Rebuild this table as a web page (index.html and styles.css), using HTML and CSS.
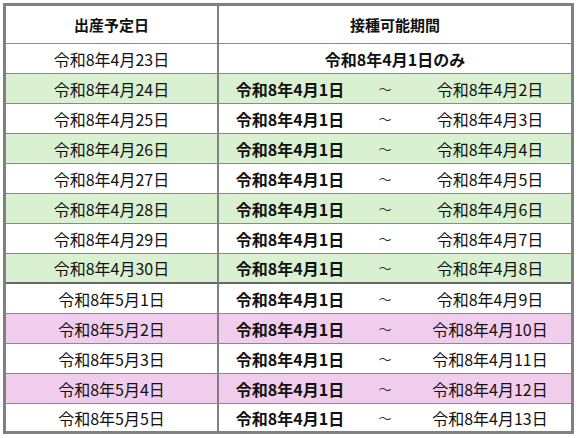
FILE: index.html
```html
<!DOCTYPE html>
<html lang="ja">
<head>
<meta charset="utf-8">
<link rel="stylesheet" href="styles.css">
</head>
<body>
<div class="frame">
<table class="schedule">
  <colgroup>
    <col class="c-due">
    <col class="c-from">
    <col class="c-tilde">
    <col class="c-to">
  </colgroup>
  <thead>
    <tr class="head">
      <th class="due">出産予定日</th>
      <th colspan="3">接種可能期間</th>
    </tr>
  </thead>
  <tbody>
    <tr><td class="due">令和8年4月23日</td><td colspan="3" class="only">令和8年4月1日のみ</td></tr>
    <tr class="green"><td class="due">令和8年4月24日</td><td class="from">令和8年4月1日</td><td class="tilde">～</td><td class="to">令和8年4月2日</td></tr>
    <tr><td class="due">令和8年4月25日</td><td class="from">令和8年4月1日</td><td class="tilde">～</td><td class="to">令和8年4月3日</td></tr>
    <tr class="green"><td class="due">令和8年4月26日</td><td class="from">令和8年4月1日</td><td class="tilde">～</td><td class="to">令和8年4月4日</td></tr>
    <tr><td class="due">令和8年4月27日</td><td class="from">令和8年4月1日</td><td class="tilde">～</td><td class="to">令和8年4月5日</td></tr>
    <tr class="green"><td class="due">令和8年4月28日</td><td class="from">令和8年4月1日</td><td class="tilde">～</td><td class="to">令和8年4月6日</td></tr>
    <tr><td class="due">令和8年4月29日</td><td class="from">令和8年4月1日</td><td class="tilde">～</td><td class="to">令和8年4月7日</td></tr>
    <tr class="green month-end"><td class="due">令和8年4月30日</td><td class="from">令和8年4月1日</td><td class="tilde">～</td><td class="to">令和8年4月8日</td></tr>
    <tr><td class="due">令和8年5月1日</td><td class="from">令和8年4月1日</td><td class="tilde">～</td><td class="to">令和8年4月9日</td></tr>
    <tr class="pink"><td class="due">令和8年5月2日</td><td class="from">令和8年4月1日</td><td class="tilde">～</td><td class="to">令和8年4月10日</td></tr>
    <tr><td class="due">令和8年5月3日</td><td class="from">令和8年4月1日</td><td class="tilde">～</td><td class="to">令和8年4月11日</td></tr>
    <tr class="pink"><td class="due">令和8年5月4日</td><td class="from">令和8年4月1日</td><td class="tilde">～</td><td class="to">令和8年4月12日</td></tr>
    <tr class="last"><td class="due">令和8年5月5日</td><td class="from">令和8年4月1日</td><td class="tilde">～</td><td class="to">令和8年4月13日</td></tr>
  </tbody>
</table>
</div>
</body>
</html>
```
FILE: styles.css
```css
html, body {
  margin: 0;
  padding: 0;
  background: #ffffff;
}
body {
  padding: 3px 0 0 3px;
  font-family: "Noto Sans CJK JP", "Noto Sans", sans-serif;
  color: #111111;
}
.frame {
  width: 565px;
  border: 3px solid #808080;
}
.schedule {
  width: 565px;
  table-layout: fixed;
  border-collapse: separate;
  border-spacing: 0;
}
.c-due { width: 213px; }
.c-from { width: 142px; }
.c-tilde { width: 48px; }
.c-to { width: 162px; }
.schedule th,
.schedule td {
  box-sizing: border-box;
  padding: 0;
  height: 30px;
  text-align: center;
  vertical-align: middle;
  font-size: 16px;
  line-height: 20px;
  border-bottom: 1px solid #8a8a8a;
  white-space: nowrap;
}
.schedule th {
  height: 38px;
  font-size: 15px;
  font-weight: bold;
}
.schedule .due {
  border-right: 2px solid #808080;
}
.only,
.from {
  font-weight: bold;
}
.schedule .tilde {
  font-weight: normal;
  font-size: 13px;
  color: #333333;
}
.green td { background: #d9f1d1; }
.pink td { background: #f0cdec; }
.month-end td {
  border-bottom: 2px solid #666666;
}
.last td {
  height: 27px;
  border-bottom: none;
}
```
